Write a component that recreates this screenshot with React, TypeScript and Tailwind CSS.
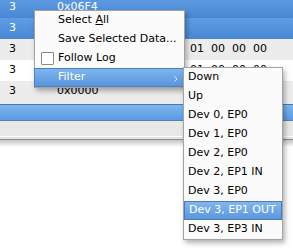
import React from "react";

const rows = [
  { bg: "sel", a: "3", b: "0x06F4", c: "" },
  { bg: "sel", a: "3", b: "", c: "" },
  { bg: "gray", a: "3", b: "", c: "01  00  00  00" },
  { bg: "white", a: "3", b: "", c: "01  00  00  00" },
  { bg: "gray", a: "3", b: "0x0000", c: "" },
];

const sub = [
  "Down",
  "Up",
  "Dev 0, EP0",
  "Dev 1, EP0",
  "Dev 2, EP0",
  "Dev 2, EP1 IN",
  "Dev 3, EP0",
  "Dev 3, EP1 OUT",
  "Dev 3, EP3 IN",
];

export default function App() {
  return (
    <div className="relative w-[293px] h-[251px] overflow-hidden bg-white font-['DejaVu_Sans',sans-serif] text-[11px] text-black">
      <div className="flex flex-col -mt-[3px]">
        {rows.map((r, i) => (
          <div
            key={i}
            className={
              "relative h-[21px] flex items-center " +
              (r.bg === "sel"
                ? "bg-gradient-to-b from-[#5e9de3] to-[#4a87d3] text-white"
                : r.bg === "gray"
                ? "bg-[#ececec]"
                : "bg-white")
            }
          >
            <span className="absolute left-[9px]">{r.a}</span>
            {r.b && <span className="absolute left-[57px]">{r.b}</span>}
            {r.c && <span className="absolute left-[190px] whitespace-pre">{r.c}</span>}
          </div>
        ))}
        <div className="h-[2px] bg-[#ececec]" />
        <div className="h-px bg-[#4a78b4]" />
        <div className="h-[15px] bg-gradient-to-b from-[#7cb6f0] to-[#5b9be4]" />
        <div className="h-px bg-[#5a7fae]" />
        <div className="h-[15px] bg-[#e8e8e8]" />
        <div className="h-px bg-[#fbfbfb]" />
        <div className="h-[2px] bg-[#e2e2e2]" />
        <div className="h-px bg-[#8e8e8e]" />
        <div className="h-[7px] bg-gradient-to-b from-[#c4c4c4] to-white" />
      </div>

      {/* Main context menu */}
      <div className="absolute left-[34px] top-[10px] w-[151px] border border-[#a3a3a3] bg-[#fbfbfb] shadow-[2px_3px_5px_rgba(0,0,0,0.3)] flex flex-col">
        <div className="h-[19px] flex items-center pl-[23px]">
          Select <span className="underline ml-[3.5px]">A</span>ll
        </div>
        <div className="h-[19px] flex items-center pl-[23px] whitespace-nowrap">Save Selected Data...</div>
        <div className="h-[19px] flex items-center pl-[6px]">
          <span className="w-[13px] h-[13px] border border-[#8a8a8a] rounded-[1px] bg-white mr-[4px]" />
          Follow Log
        </div>
        <div className="relative h-[19px] flex items-center pl-[23px] text-white border border-[#4d80c2] bg-gradient-to-b from-[#7db5ee] to-[#5995dc] -mx-px">
          Filter
          <svg className="absolute right-[6px] top-[7px]" width="4" height="6" viewBox="0 0 4 6">
            <path d="M0.5 0.5 L3 3 L0.5 5.5" fill="none" stroke="#d6e6f8" strokeWidth="1" />
          </svg>
        </div>
      </div>

      {/* Submenu */}
      <div className="absolute left-[183px] top-[67px] w-[100px] border border-[#a3a3a3] bg-[#fbfbfb] shadow-[2px_3px_5px_rgba(0,0,0,0.3)] flex flex-col">
        {sub.map((s, i) => (
          <div
            key={i}
            className={
              "h-[19px] flex items-center pl-[4px] whitespace-nowrap " +
              (i === 7
                ? "text-white border border-[#4a7cbd] bg-gradient-to-b from-[#80b7ef] to-[#5b97dd] pl-[3px]"
                : "")
            }
          >
            {s}
          </div>
        ))}
      </div>
    </div>
  );
}
